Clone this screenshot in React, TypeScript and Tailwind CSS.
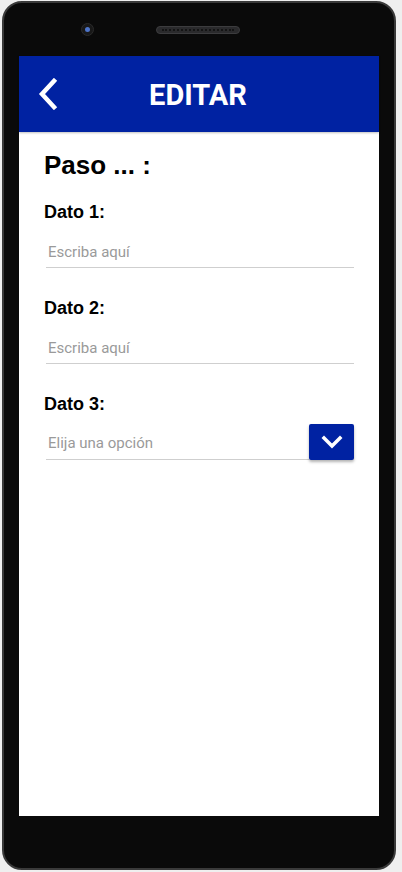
import { useState } from "react";

function BackIcon() {
  return (
    <svg width="22" height="32" viewBox="0 0 22 32" fill="none">
      <polyline points="17,3 5,16 17,29" stroke="white" strokeWidth="4.5" strokeLinecap="square" strokeLinejoin="miter" />
    </svg>
  );
}

function ChevronDown() {
  return (
    <svg width="22" height="14" viewBox="0 0 22 14" fill="none">
      <polyline points="3,3 11,11 19,3" stroke="white" strokeWidth="3.5" strokeLinecap="square" />
    </svg>
  );
}

function Field({ label, placeholder }: { label: string; placeholder: string }) {
  const [value, setValue] = useState("");
  return (
    <div className="flex flex-col">
      <label className="h-[22px] text-[18px] leading-[22px] font-bold text-black font-['Liberation_Sans',Arial,sans-serif]">
        {label}
      </label>
      <input
        value={value}
        onChange={e => setValue(e.target.value)}
        placeholder={placeholder}
        className="mt-[9px] ml-[2px] h-[36px] pt-[4px] pl-[2px] border-b border-[#cfcfcf] outline-none bg-transparent text-[15px] text-[#333] placeholder:text-[#9a9a9a] font-['Roboto',sans-serif]"
      />
    </div>
  );
}

export default function App() {
  return (
    <div className="w-[402px] h-[872px] bg-[#efefef] pt-[1px] pl-[2px]">
      <div className="w-[394px] h-[869px] rounded-[20px] border-2 border-[#3a3a3a] bg-[#0a0a0a] flex flex-col px-[15px]">
        {/* camera + speaker */}
        <div className="h-[53px] flex items-center pl-[62px]">
          <div className="w-[13px] h-[13px] rounded-full bg-[#181818] border border-[#2a2a2a] flex items-center justify-center">
            <div className="w-[5px] h-[5px] rounded-full bg-[#4d74c9]" />
          </div>
          <div className="ml-[62px] w-[84px] h-[8px] rounded-full bg-[#2a2a2c] border border-[#3c3c3e] flex items-center px-[5px]">
            <div className="w-full border-t-2 border-dotted border-[#141414]" />
          </div>
        </div>

        {/* screen */}
        <div className="w-[360px] h-[760px] bg-white flex flex-col">
          <header className="h-[76px] bg-[#0022a2] grid grid-cols-[60px_1fr_60px] items-center shadow-[0_1px_2px_rgba(0,0,0,0.25)]">
            <button className="pl-[18px] flex items-center">
              <BackIcon />
            </button>
            <h1 className="pt-[3px] pr-[2px] text-center text-white text-[29px] font-bold font-['Roboto',sans-serif]">
              EDITAR
            </h1>
            <div />
          </header>

          <main className="px-[25px] pt-[19px] flex flex-col">
            <h2 className="h-[28px] text-[26px] leading-[28px] font-bold text-black font-['Liberation_Sans',Arial,sans-serif]">
              Paso ... :
            </h2>
            <div className="mt-[22px] flex flex-col gap-[29px]">
              <Field label="Dato 1:" placeholder="Escriba aquí" />
              <Field label="Dato 2:" placeholder="Escriba aquí" />
              <div className="flex flex-col">
                <label className="h-[22px] text-[18px] leading-[22px] font-bold text-black font-['Liberation_Sans',Arial,sans-serif]">
                  Dato 3:
                </label>
                <div className="mt-[9px] ml-[2px] flex h-[36px]">
                  <div className="flex-1 border-b border-[#cfcfcf] flex items-center pt-[4px] pl-[2px] text-[15px] text-[#9a9a9a] font-['Roboto',sans-serif]">
                    Elija una opción
                  </div>
                  <button className="w-[45px] h-[36px] bg-[#0022a2] rounded-[2px] flex items-center justify-center shadow-[0_2px_3px_rgba(0,0,0,0.3)]">
                    <ChevronDown />
                  </button>
                </div>
              </div>
            </div>
          </main>
        </div>
      </div>
    </div>
  );
}
